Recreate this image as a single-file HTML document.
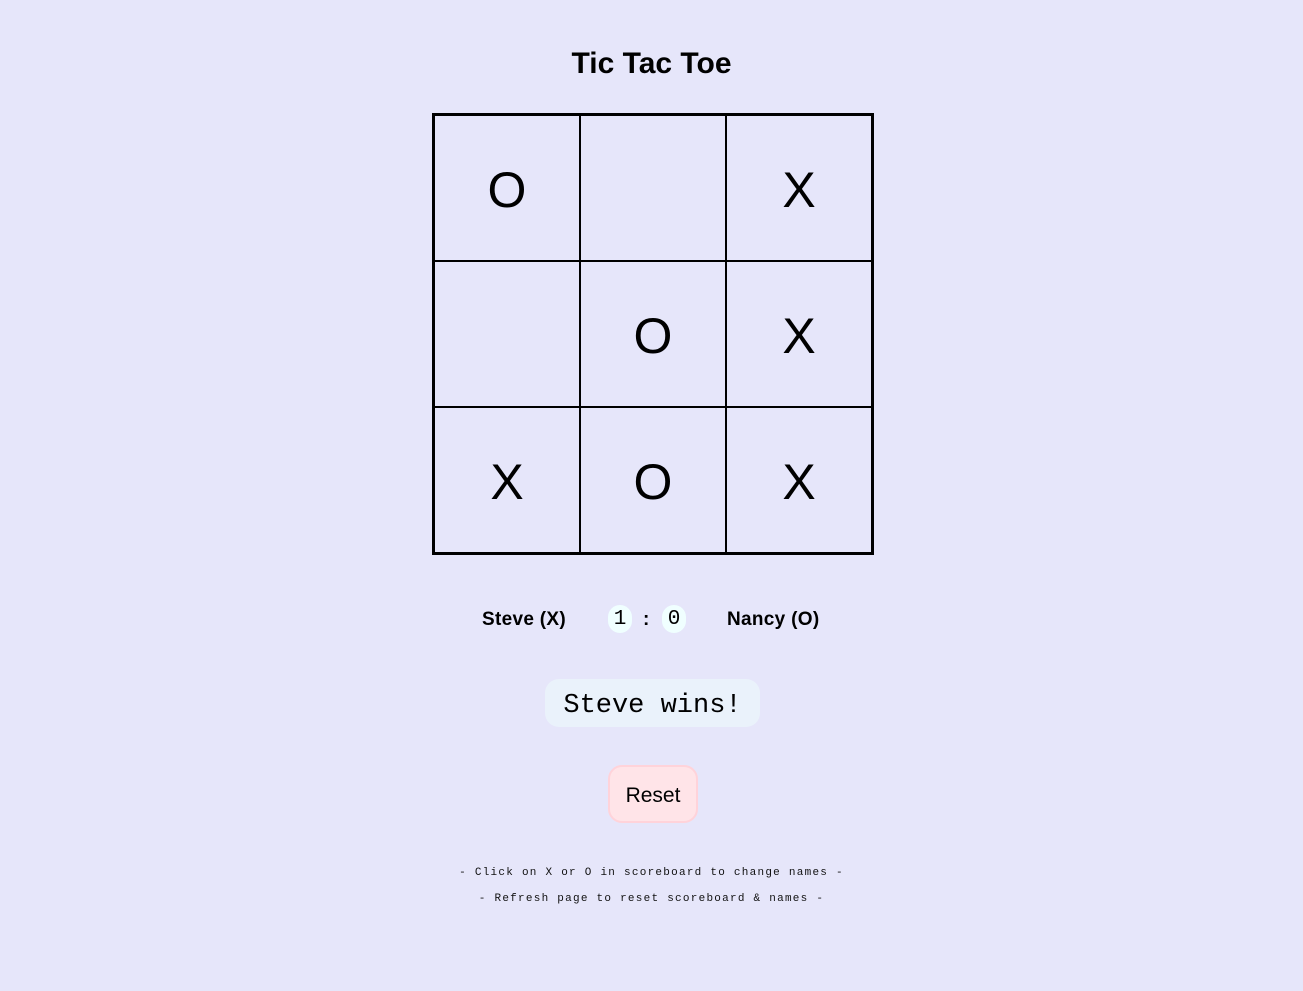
<!DOCTYPE html>
<html><head><meta charset="utf-8"><style>
body{margin:0;background:#e6e6fa;width:1303px;height:991px;font-family:"Liberation Sans","DejaVu Sans",sans-serif;color:#000;position:relative;overflow:hidden}
h1{position:absolute;top:45px;left:0;width:1303px;text-align:center;margin:0;font-size:30px;font-weight:bold;line-height:38px}
.board{position:absolute;left:432px;top:113px;width:438px;height:438px;border:2px solid #000;display:grid;grid-template-columns:146px 146px 146px;grid-template-rows:146px 146px 146px}
.c{border:1px solid #000;display:flex;align-items:center;justify-content:center;font-size:50px;line-height:1;padding-top:4px;box-sizing:border-box}
.score{position:absolute;top:607px;font-weight:bold;font-size:19px;line-height:26px}
.sb{position:absolute;top:605px;height:28px;width:24px;background:#f0ffff;border-radius:12px;font-family:"Liberation Mono",monospace;font-size:21px;line-height:30px;text-align:center}
.msg{position:absolute;left:545px;top:679px;width:215px;height:48px;background:#eaf2fb;border-radius:14px;font-family:"Liberation Mono",monospace;font-size:27px;line-height:54px;text-align:center}
.btn{position:absolute;left:608px;top:765px;width:86px;height:54px;background:#ffe4e8;border:2px solid #ffd3da;border-radius:14px;font-size:21px;line-height:58px;text-align:center}
.f{position:absolute;left:0;width:1303px;text-align:center;font-family:"Liberation Mono",monospace;font-size:11px;letter-spacing:1.25px;color:#111}
</style></head><body>
<h1>Tic Tac Toe</h1>
<div class="board">
<div class="c">O</div><div class="c"></div><div class="c">X</div>
<div class="c"></div><div class="c">O</div><div class="c">X</div>
<div class="c">X</div><div class="c">O</div><div class="c">X</div>
</div>
<div class="score" style="left:482px;letter-spacing:0.3px">Steve (X)</div>
<div class="sb" style="left:608px">1</div>
<div class="score" style="left:643px">:</div>
<div class="sb" style="left:662px">0</div>
<div class="score" style="left:727px;letter-spacing:0.3px">Nancy (O)</div>
<div class="msg">Steve wins!</div>
<div class="btn">Reset</div>
<div class="f" style="top:867px">- Click on X or O in scoreboard to change names -</div>
<div class="f" style="top:893px">- Refresh page to reset scoreboard &amp; names -</div>
</body></html>
